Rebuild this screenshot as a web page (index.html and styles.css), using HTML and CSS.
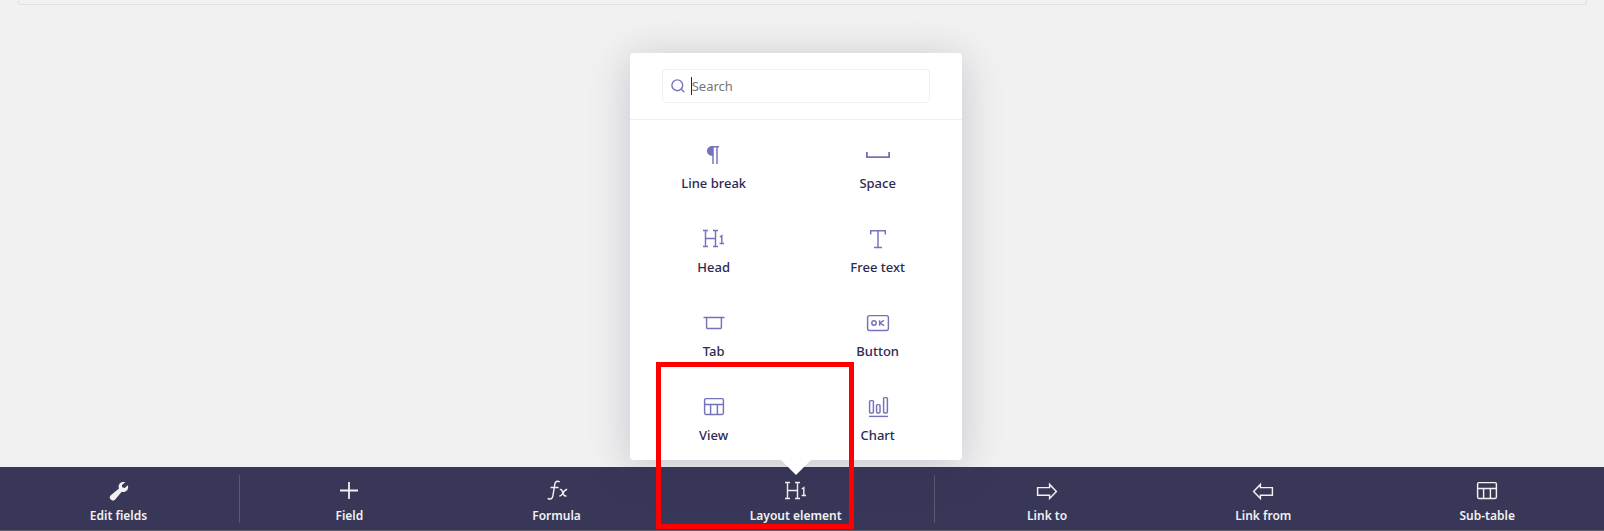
FILE: index.html
```html
<!DOCTYPE html>
<html lang="en">
<head>
<meta charset="utf-8">
<title>Form editor</title>
<link rel="stylesheet" href="styles.css">
</head>
<body>
<svg class="sprite" aria-hidden="true">
  <symbol id="heading" viewBox="0 0 24 24"><path d="M1 3.500h5M11 3.500h5M1 19.500h5M11 19.500h5M3.500 3.500v16M13.500 3.500v16M3.500 11.500h10M17.800 10l2-1.400v8M17.600 16.500h4.400"/></symbol>
  <symbol id="table" viewBox="0 0 24 24"><rect x="2.600" y="3.600" width="18.800" height="15.800" rx="1.300"/><path d="M2.600 9.500h18.800M8.600 9.500v9.900M15.400 9.500v9.900"/></symbol>
</svg>
<div class="page">
  <main class="canvas"><div class="panel-end"></div></main>
  <nav class="toolbar">
    <div class="group group-edit">
      <div class="tool"><svg class="icon" viewBox="0 0 24 24"><path class="solid" d="M18.300 3.300c-3-1.300-6.700.8-6.700 4.300 0 .8.100 1.300.4 1.900L3.800 16.200a3.100 3.100 0 1 0 4.400 4.400L14.700 12.700c3.600 1.100 6.700-1.600 6.400-5 0-.5-.1-1-.3-1.400l-3.100 2.600-2.500-.7-.3-2.200z"/></svg><span class="tool-label">Edit fields</span></div>
    </div>
    <div class="group group-fields">
      <div class="tool"><svg class="icon thick" viewBox="0 0 24 24"><path d="M3 11.500h18M12 3v17"/></svg><span class="tool-label">Field</span></div>
      <div class="tool"><svg class="icon fx" viewBox="0 0 24 24"><path d="M14.700 2.800c-2.500-1.300-4.400-.3-4.900 2.300L7.900 16.800c-.5 3-2.400 4-5.200 2.700M5.500 8.500h8M14.800 10.500c1.800-.5 2.300.7 2.900 3 .6 2.500 1.200 4 3.800 3.500M22.200 10.500c-2-.3-3.600 2.500-4.500 4-.8 1.400-1.700 2.700-3.300 2.500"/></svg><span class="tool-label">Formula</span></div>
      <div class="tool active"><svg class="icon"><use href="#heading"/></svg><span class="tool-label">Layout element</span>
        <section class="popup">
          <header class="popup-head">
            <div class="search">
              <svg class="search-icon" viewBox="0 0 14 14"><circle cx="6.300" cy="6.300" r="5.400"/><path d="M10.300 10.300l3 3"/></svg>
              <span class="search-text">Search</span>
            </div>
          </header>
          <div class="elements">
            <div class="element"><svg class="icon" viewBox="0 0 24 24"><path class="solid" d="M17 3v1.500h-6v8.400C7.300 12.900 5 11 5 8s2.300-5 5.500-5z"/><path d="M11 3.500V21M15 3.500V21"/></svg><span>Line break</span></div>
            <div class="element"><svg class="icon bold" viewBox="0 0 24 24"><path d="M.9 9v5.200h22.200V9"/></svg><span>Space</span></div>
            <div class="element"><svg class="icon"><use href="#heading"/></svg><span>Head</span></div>
            <div class="element"><svg class="icon" viewBox="0 0 24 24"><path d="M4.700 7.500V3.700h14.600v3.800M12 3.700v16.800M8 20.500h8"/></svg><span>Free text</span></div>
            <div class="element"><svg class="icon" viewBox="0 0 24 24"><path d="M1.500 6.500h21M4.600 6.500v10q0 1 1 1h12.800q1 0 1-1v-10"/></svg><span>Tab</span></div>
            <div class="element"><svg class="icon" viewBox="0 0 24 24"><rect x="1.600" y="4.600" width="20.800" height="14.800" rx="2"/><circle cx="8" cy="12" r="2.200"/><path d="M13.600 9.200v5.600M17.900 9.400L14 12l4.100 2.600"/></svg><span>Button</span></div>
            <div class="element"><svg class="icon"><use href="#table"/></svg><span>View</span></div>
            <div class="element"><svg class="icon" viewBox="0 0 24 24"><rect x="3.600" y="5.600" width="3.800" height="12.400" rx="1"/><rect x="10.600" y="9.600" width="3.400" height="8.400" rx="1"/><rect x="17.600" y="2.600" width="3.800" height="15.400" rx="1"/><path d="M3 21.400h19"/></svg><span>Chart</span></div>
          </div>
        </section>
      </div>
    </div>
    <div class="group group-links">
      <div class="tool"><svg class="icon" viewBox="0 0 24 24"><path d="M2.600 8.600h12V5.400l6.800 7-6.800 7v-3.100h-12z"/></svg><span class="tool-label">Link to</span></div>
      <div class="tool"><svg class="icon" viewBox="0 0 24 24"><path d="M21.400 8.600h-12V5.400l-6.800 7 6.800 7v-3.100h12z"/></svg><span class="tool-label">Link from</span></div>
      <div class="tool"><svg class="icon"><use href="#table"/></svg><span class="tool-label">Sub-table</span></div>
    </div>
  </nav>
  <div class="highlight"></div>
</div>
</body>
</html>
```
FILE: styles.css
```css
* { box-sizing: border-box; }
body { margin: 0; font-family: "Noto Sans", sans-serif; font-size: 13px; font-weight: 500; }
.sprite { position: absolute; width: 0; height: 0; }
.page { position: relative; display: flex; flex-direction: column; height: 531px; overflow: hidden; background: #f1f1f1; }
.canvas { flex: 1; padding: 0 17px 0 18px; }
.panel-end { height: 5px; border: 1px solid #e0dfe9; border-top: 0; border-radius: 0 0 3px 3px; }
.toolbar { display: flex; height: 64px; padding: 8px 0 7px; background: #383757; border-bottom: 1px solid #5e5c75; color: #f1f1f1; }
.group { display: flex; }
.group-edit { width: 240px; padding-right: 2px; border-right: 1px solid #5a5975; }
.group-fields { width: 695px; padding: 0 8px 0 11px; border-right: 1px solid #5a5975; }
.group-links { flex: 1; padding: 0 5px 0 8px; }
.tool { flex: 1 1 auto; position: relative; display: flex; flex-direction: column; align-items: center; padding-top: 4px; }
.tool-label { margin-top: 4px; font-size: 12px; font-weight: 600; line-height: 18px; white-space: nowrap; }
.icon { display: block; width: 24px; height: 24px; fill: none; stroke: currentColor; stroke-width: 1.45; overflow: visible; }
.icon .solid { fill: currentColor; stroke: none; }
.thick, .bold { stroke-width: 1.8; }
.popup { position: absolute; left: calc(50% - 166px); bottom: 63px; width: 332px; height: 407px; background: #fff; border-radius: 4px; box-shadow: 0 6px 42px rgba(47, 43, 88, .22); color: #2d2952; }
.popup::after { content: ""; position: absolute; top: 100%; left: 151px; border: 15px solid transparent; border-top-color: #fff; border-bottom: 0; }
.popup-head { height: 67px; padding: 16px 32px; border-bottom: 1px solid #efeff7; }
.search { display: flex; align-items: center; height: 34px; padding: 0 8px; border: 1px solid #efeff7; border-radius: 4px; }
.search-icon { width: 14px; height: 14px; fill: none; stroke: #7472bd; stroke-width: 1.4; }
.search-text { margin-left: 6px; border-left: 1px solid #25213f; color: #757575; font-weight: 400; line-height: 18px; }
.elements { display: grid; grid-template-columns: 164px 164px; grid-auto-rows: 84px; padding: 0 2px; }
.element { display: flex; flex-direction: column; align-items: center; padding-top: 23px; line-height: 18px; }
.element span { margin-top: 7px; }
.element .icon { color: #7472bd; }
.highlight { position: absolute; left: 656px; top: 362px; width: 198px; height: 167px; border: 5px solid #f00; }
```
